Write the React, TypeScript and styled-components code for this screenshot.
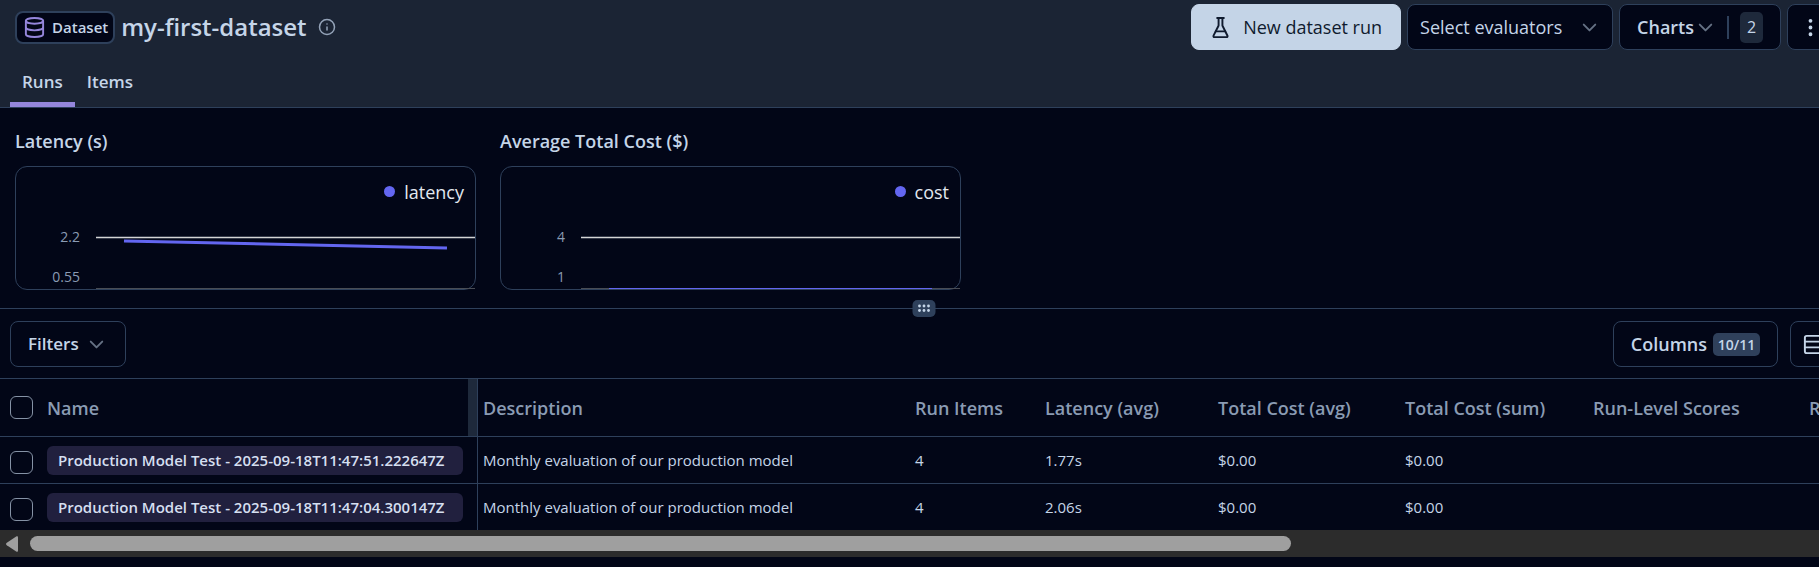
import React from 'react';
import styled, { createGlobalStyle, css } from 'styled-components';
import { ChevronDown, Database, EllipsisVertical, Info, Rows3 } from 'lucide-react';

const color = {
  bg: '#020617',
  header: '#1b2434',
  border: '#2e405b',
  secondary: '#1e293b',
  text: '#c5d5e8',
  muted: '#8a9bb3',
  faint: '#657184',
  accent: '#9586dc',
  series: '#6366f1',
};

const GlobalStyle = createGlobalStyle`
  *, *::before, *::after { box-sizing: border-box; }
  html, body { margin: 0; min-height: 100%; background: ${color.bg}; }
  body {
    color: ${color.text};
    font-family: "Open Sans", "Noto Sans", sans-serif;
    font-size: 18px;
    line-height: 24px;
    overflow-x: hidden;
  }
  button, input, select { font: inherit; color: inherit; margin: 0; }
`;

const Viewport = styled.div`
  overflow: hidden;
`;

/* The page is slightly wider than the window, so its right edge is cut off. */
const Page = styled.div`
  width: calc(100% + 28px);
`;

const Header = styled.header`
  background: ${color.header};
  border-bottom: 1px solid ${color.border};
  padding-top: 4px;
`;

const HeaderRow = styled.div`
  display: flex;
  align-items: center;
  justify-content: space-between;
  padding: 0 14px 0 15px;
`;

const TitleGroup = styled.div`
  display: flex;
  align-items: center;
`;

const TypeBadge = styled.span`
  display: flex;
  align-items: center;
  gap: 6px;
  height: 33px;
  padding: 0 5px 0 6px;
  margin-right: 6px;
  border: 2px solid ${color.border};
  border-radius: 8px;
  background: ${color.bg};
  font-size: 15px;
  font-weight: 600;

  svg { color: ${color.accent}; }
`;

const Title = styled.h1`
  margin: 0 11px 0 0;
  font-size: 24px;
  line-height: 32px;
  font-weight: 600;
`;

const Actions = styled.div`
  display: flex;
  align-items: center;
  gap: 6px;
`;

const Button = styled.button<{ $primary?: boolean; $small?: boolean; $gap?: number; $square?: boolean }>`
  display: flex;
  align-items: center;
  gap: ${(p) => p.$gap ?? 6}px;
  height: 46px;
  padding: 0 17px;
  border: 1px solid ${color.border};
  border-radius: 8px;
  background: ${color.bg};
  font-size: ${(p) => (p.$small ? 17 : 18)}px;
  font-weight: 600;
  white-space: nowrap;
  cursor: pointer;

  ${(p) =>
    p.$primary &&
    css`
      padding-right: 18px;
      background: #c4d4e7;
      border-color: #c4d4e7;
      color: #0f1a2e;
      font-weight: 500;
    `}
  ${(p) =>
    p.$square &&
    css`
      width: 46px;
      padding: 0;
      justify-content: center;
    `}
`;

const Chevron = styled(ChevronDown)`
  color: ${color.faint};
`;

const SelectBox = styled.label`
  position: relative;
  display: block;
  width: 206px;
  height: 46px;

  svg {
    position: absolute;
    right: 12px;
    top: 12px;
    pointer-events: none;
  }
`;

const Select = styled.select`
  appearance: none;
  width: 100%;
  height: 100%;
  padding: 0 40px 0 12px;
  border: 1px solid ${color.border};
  border-radius: 8px;
  background: ${color.bg};
`;

const Separator = styled.span`
  width: 2px;
  height: 23px;
  margin: 0 11px 0 10px;
  background: ${color.border};
`;

const CountBadge = styled.span`
  width: 23px;
  border-radius: 5px;
  background: ${color.secondary};
  font-size: 16px;
  font-weight: 400;
  line-height: 31px;
  text-align: center;
`;

const ColumnsBadge = styled.span`
  width: 47px;
  border-radius: 5px;
  background: #2f405b;
  font-size: 14px;
  font-weight: 600;
  line-height: 23px;
  text-align: center;
`;

const Tabs = styled.nav`
  display: flex;
  margin-top: 12px;
  padding: 0 10px;
`;

const Tab = styled.a<{ $active?: boolean }>`
  height: 45px;
  padding: 0 12px;
  border-bottom: 5px solid ${(p) => (p.$active ? color.accent : 'transparent')};
  color: inherit;
  font-size: 17px;
  font-weight: 600;
  line-height: 40px;
  text-decoration: none;
`;

const ChartPanel = styled.section`
  position: relative;
  display: flex;
  gap: 24px;
  padding: 21px 15px 18px;
  border-bottom: 1px solid ${color.border};
`;

const ChartBlock = styled.article`
  flex: 0 1 461px;
`;

const ChartTitle = styled.h2`
  margin: 0 0 13px;
  font-size: 18px;
  font-weight: 600;
`;

const ChartCard = styled.div`
  height: 124px;
  border: 1px solid ${color.border};
  border-radius: 12px;
`;

const Legend = styled.div`
  display: flex;
  align-items: center;
  justify-content: flex-end;
  gap: 9px;
  height: 49px;
  padding-right: 11px;
  color: #e2e8f0;

  &::before {
    content: '';
    width: 11px;
    height: 11px;
    border-radius: 50%;
    background: ${color.series};
  }
`;

const Plot = styled.svg`
  display: block;
  width: 100%;
  height: 73px;

  text {
    fill: ${color.muted};
    font-size: 14px;
    text-anchor: end;
  }
`;

const ResizeHandle = styled.button`
  position: absolute;
  left: 50%;
  bottom: -9px;
  display: flex;
  align-items: center;
  justify-content: center;
  width: 23px;
  height: 17px;
  padding: 0;
  border: 0;
  border-radius: 5px;
  background: ${color.border};
  transform: translateX(-50%);
  cursor: row-resize;
`;

const Toolbar = styled.div`
  display: flex;
  align-items: center;
  justify-content: space-between;
  padding: 12px 11px 11px 10px;
`;

const ToolbarGroup = styled.div`
  display: flex;
  gap: 12px;
`;

const TableWrap = styled.div`
  overflow: hidden;
  border-top: 1px solid ${color.border};
`;

const Table = styled.table`
  width: 2019px;
  table-layout: fixed;
  border-collapse: separate;
  border-spacing: 0;
`;

const Col = styled.col<{ $width: number }>`
  width: ${(p) => p.$width}px;
`;

const HeadCell = styled.th`
  position: relative;
  height: 58px;
  padding: 0 5px;
  border-bottom: 1px solid ${color.border};
  color: ${color.muted};
  font-weight: 600;
  text-align: left;
  white-space: nowrap;
`;

const NameHead = styled(HeadCell)`
  padding-left: 0;
  border-right: 1px solid ${color.border};
`;

const CheckHead = styled(HeadCell)`
  padding: 0 0 0 10px;
`;

const ColumnResizer = styled.span`
  position: absolute;
  top: 0;
  right: 0;
  bottom: 0;
  width: 9px;
  background: ${color.secondary};
`;

const Row = styled.tr`
  &:not(:last-child) td { border-bottom: 1px solid ${color.border}; }
  &:last-child td { height: 46px; }
`;

const Cell = styled.td`
  height: 47px;
  padding: 0 5px;
  font-size: 15px;
  white-space: nowrap;
`;

const NameCell = styled(Cell)`
  padding: 0 14px 0 0;
  border-right: 1px solid ${color.border};
`;

const CheckCell = styled(Cell)`
  padding: 4px 0 0 10px;
`;

const Checkbox = styled.input`
  appearance: none;
  display: block;
  width: 23px;
  height: 23px;
  border: 1px solid #8592a5;
  border-radius: 6px;

  &:checked { background: ${color.accent}; }
`;

const RunLink = styled.a`
  display: block;
  padding: 0 11px;
  border-radius: 6px;
  background: #21203e;
  color: #d5dff0;
  font-weight: 600;
  line-height: 29px;
  text-decoration: none;
`;

const ScrollBar = styled.div`
  display: flex;
  align-items: center;
  gap: 12px;
  height: 27px;
  padding-left: 6px;
  background: #2c2c2c;
`;

const ScrollThumb = styled.div`
  width: calc(70% - 8px);
  height: 15px;
  border-radius: 8px;
  background: #9f9f9f;
`;

interface ChartProps {
  title: string;
  series: string;
  ticks: [string, string];
  line: [number, number];
  thickness: number;
}

const charts: ChartProps[] = [
  { title: 'Latency (s)', series: 'latency', ticks: ['2.2', '0.55'], line: [25, 32], thickness: 3 },
  { title: 'Average Total Cost ($)', series: 'cost', ticks: ['4', '1'], line: [72.5, 72.5], thickness: 1 },
];

function Chart({ title, series, ticks, line, thickness }: ChartProps) {
  return (
    <ChartBlock>
      <ChartTitle>{title}</ChartTitle>
      <ChartCard>
        <Legend>{series}</Legend>
        <Plot viewBox="0 0 459 73" role="img" aria-label={`${title} per run`}>
          <text x="64" y="26">{ticks[0]}</text>
          <text x="64" y="66">{ticks[1]}</text>
          <path d="M80 21.5H459" stroke="#6b7280" strokeOpacity="0.5" strokeWidth="3" />
          <path d="M80 21.5H459" stroke="#d4d4d4" strokeWidth="1" />
          <path d="M80 72.5H459" stroke="#494d55" strokeWidth="1" />
          <path d={`M108 ${line[0]}L431 ${line[1]}`} stroke={color.series} strokeWidth={thickness} />
        </Plot>
      </ChartCard>
    </ChartBlock>
  );
}

function FlaskIcon() {
  return (
    <svg
      width="23"
      height="23"
      viewBox="0 0 24 24"
      fill="none"
      stroke="currentColor"
      strokeWidth="2"
      strokeLinecap="round"
      strokeLinejoin="round"
      aria-hidden="true"
    >
      <path d="M10 2v7.527a2 2 0 0 1-.211.896L4.72 20.55a1 1 0 0 0 .9 1.45h12.76a1 1 0 0 0 .9-1.45l-5.069-10.127A2 2 0 0 1 14 9.527V2" />
      <path d="M8.5 2h7" />
      <path d="M7 16h10" />
    </svg>
  );
}

const columns: [string, number][] = [
  ['Description', 432],
  ['Run Items', 130],
  ['Latency (avg)', 173],
  ['Total Cost (avg)', 187],
  ['Total Cost (sum)', 188],
  ['Run-Level Scores', 216],
  ['Run Item Scores', 215],
];

const runs = [
  ['Production Model Test - 2025-09-18T11:47:51.222647Z', 'Monthly evaluation of our production model', '4', '1.77s', '$0.00', '$0.00', '', ''],
  ['Production Model Test - 2025-09-18T11:47:04.300147Z', 'Monthly evaluation of our production model', '4', '2.06s', '$0.00', '$0.00', '', ''],
];

export default function App() {
  return (
    <Viewport>
      <GlobalStyle />
      <Page>
        <Header>
          <HeaderRow>
            <TitleGroup>
              <TypeBadge>
                <Database size={23} />
                Dataset
              </TypeBadge>
              <Title>my-first-dataset</Title>
              <Info size={18} color="#94a3b8" />
            </TitleGroup>
            <Actions>
              <Button $primary $gap={11}>
                <FlaskIcon />
                New dataset run
              </Button>
              <SelectBox>
                <Select aria-label="Select evaluators">
                  <option>Select evaluators</option>
                </Select>
                <Chevron size={23} />
              </SelectBox>
              <Button $gap={0}>
                Charts
                <Chevron size={23} />
                <Separator />
                <CountBadge>2</CountBadge>
              </Button>
              <Button $square aria-label="More actions">
                <EllipsisVertical size={23} />
              </Button>
            </Actions>
          </HeaderRow>
          <Tabs>
            <Tab href="#runs" $active>Runs</Tab>
            <Tab href="#items">Items</Tab>
          </Tabs>
        </Header>

        <ChartPanel>
          {charts.map((c) => (
            <Chart key={c.series} {...c} />
          ))}
          <ResizeHandle aria-label="Resize charts">
            <svg width="13" height="9" viewBox="0 0 13 9" fill={color.text}>
              {[2, 6.5, 11].map((x) =>
                [2, 6.5].map((y) => <circle key={`${x}-${y}`} cx={x} cy={y} r="1.4" />),
              )}
            </svg>
          </ResizeHandle>
        </ChartPanel>

        <Toolbar>
          <Button $small>
            Filters
            <Chevron size={23} />
          </Button>
          <ToolbarGroup>
            <Button>
              Columns
              <ColumnsBadge>10/11</ColumnsBadge>
            </Button>
            <Button $square aria-label="Row height">
              <Rows3 size={23} />
            </Button>
          </ToolbarGroup>
        </Toolbar>
      </Page>

      <TableWrap>
        <Table>
          <colgroup>
            <Col $width={47} />
            <Col $width={431} />
            {columns.map(([name, width]) => (
              <Col key={name} $width={width} />
            ))}
          </colgroup>
          <thead>
            <tr>
              <CheckHead>
                <Checkbox type="checkbox" aria-label="Select all runs" />
              </CheckHead>
              <NameHead>
                Name
                <ColumnResizer />
              </NameHead>
              {columns.map(([name]) => (
                <HeadCell key={name}>{name}</HeadCell>
              ))}
            </tr>
          </thead>
          <tbody>
            {runs.map(([name, ...values]) => (
              <Row key={name}>
                <CheckCell>
                  <Checkbox type="checkbox" aria-label={`Select ${name}`} />
                </CheckCell>
                <NameCell>
                  <RunLink href="#run">{name}</RunLink>
                </NameCell>
                {values.map((value, i) => (
                  <Cell key={columns[i][0]}>{value}</Cell>
                ))}
              </Row>
            ))}
          </tbody>
        </Table>
      </TableWrap>
      <ScrollBar>
        <svg width="12" height="16" viewBox="0 0 12 16" fill="#9f9f9f">
          <path d="M10.2 0.4C11.2 -0.2 12 0.3 12 1.4V14.6C12 15.7 11.2 16.2 10.2 15.6L0.8 9.2C-0.2 8.5 -0.2 7.5 0.8 6.8Z" />
        </svg>
        <ScrollThumb />
      </ScrollBar>
    </Viewport>
  );
}
